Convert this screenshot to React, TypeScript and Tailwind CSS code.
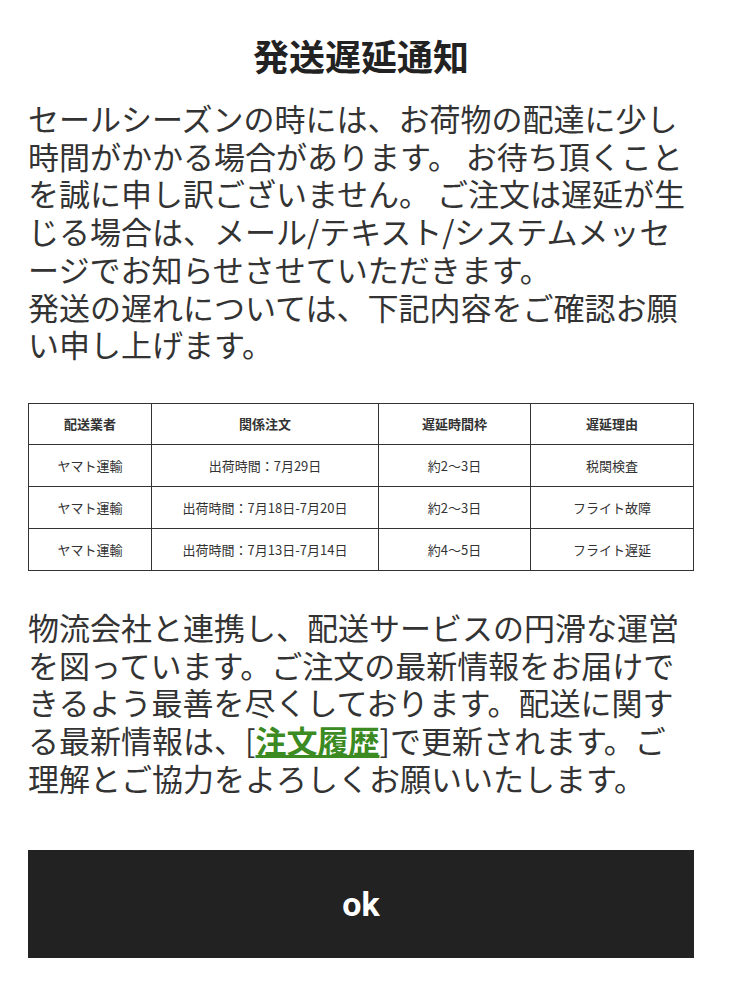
const font = { fontFamily: '"Noto Sans CJK JP", "Noto Sans", sans-serif' };

const rows = [
  ["ヤマト運輸", "出荷時間：7月29日", "約2～3日", "税関検査"],
  ["ヤマト運輸", "出荷時間：7月18日-7月20日", "約2～3日", "フライト故障"],
  ["ヤマト運輸", "出荷時間：7月13日-7月14日", "約4～5日", "フライト遅延"],
];

function DelayTable() {
  const cell = "border border-[#333] text-center align-middle text-[13px] text-[#333]";
  return (
    <table className="w-full border-collapse">
      <colgroup>
        <col className="w-[123px]" />
        <col className="w-[227px]" />
        <col className="w-[152px]" />
        <col />
      </colgroup>
      <thead>
        <tr className="h-[41px]">
          {["配送業者", "関係注文", "遅延時間枠", "遅延理由"].map((h) => (
            <th key={h} className={`${cell} font-bold`}>
              {h}
            </th>
          ))}
        </tr>
      </thead>
      <tbody>
        {rows.map((r, i) => (
          <tr key={i} className="h-[42px]">
            {r.map((c, j) => (
              <td key={j} className={`${cell} font-normal`}>
                {c}
              </td>
            ))}
          </tr>
        ))}
      </tbody>
    </table>
  );
}

export default function App() {
  return (
    <div className="min-h-[999px] bg-white pl-[28px] pr-[38px] pt-[35px] text-[#333]" style={font}>
      <h1 className="text-center text-[36px] font-bold leading-[40px] text-[#222]">発送遅延通知</h1>
      <p className="mt-[24px] text-[31px] leading-[37.7px]">
        セールシーズンの時には、お荷物の配達に少し時間がかかる場合があります。 お待ち頂くことを誠に申し訳ございません。 ご注文は遅延が生じる場合は、メール/テキスト/システムメッセージでお知らせさせていただきます。
        <br />
        発送の遅れについては、下記内容をご確認お願い申し上げます。
      </p>
      <div className="mt-[40px]">
        <DelayTable />
      </div>
      <p className="mt-[37px] text-[31px] leading-[37.7px]">
        物流会社と連携し、配送サービスの円滑な運営を図っています。ご注文の最新情報をお届けできるよう最善を尽くしております。配送に関する最新情報は、[
        <a className="font-bold text-[#3b8a22] underline underline-offset-2">注文履歴</a>
        ]で更新されます。ご理解とご協力をよろしくお願いいたします。
      </p>
      <button
        className="mt-[54px] flex h-[108px] w-full items-center justify-center bg-[#222] text-[34px] font-bold text-white"
        style={{ fontFamily: 'Roboto, "Noto Sans", sans-serif' }}
      >
        ok
      </button>
    </div>
  );
}
